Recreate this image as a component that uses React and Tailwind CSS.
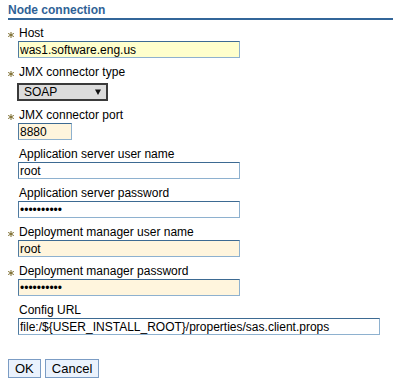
import React from "react";

function Star() {
  return (
    <svg width="6" height="6" viewBox="0 0 6 6" className="mt-[6px] ml-0">
      <g stroke="#7a6a2a" strokeWidth="1" strokeLinecap="round">
        <line x1="3" y1="0.3" x2="3" y2="5.7" />
        <line x1="0.5" y1="1.6" x2="5.5" y2="4.4" />
        <line x1="0.5" y1="4.4" x2="5.5" y2="1.6" />
      </g>
    </svg>
  );
}

function Label({ req, children }) {
  return (
    <div className="flex items-start leading-[15px] h-[15px]">
      <div className="w-[11px] flex-none">{req ? <Star /> : null}</div>
      <span>{children}</span>
    </div>
  );
}

function Field({ req, label, value, width, bg, type = "text" }) {
  return (
    <div>
      <Label req={req}>{label}</Label>
      <div className="pl-[10px]">
        <input
          readOnly
          type={type}
          value={value}
          className={`block h-[17px] ${width} ${bg} border border-[#8eb1cf] border-t-[#3d6a92] border-l-[#4f7aa0] px-[1px] text-[12px] leading-none text-black outline-none`}
        />
      </div>
    </div>
  );
}

export default function App() {
  return (
    <div className="w-[393px] h-[384px] bg-white text-[12px] text-black font-['Liberation_Sans',Arial,sans-serif]">
      <div className="pl-2 pt-[3px]">
        <h2 className="font-bold text-[#2f6296] leading-[15px] border-b-2 border-[#336699]">
          Node connection
        </h2>
      </div>
      <div className="pl-2 pt-[6px] flex flex-col gap-[7px]">
        <Field req label="Host" value="was1.software.eng.us" width="w-[222px]" bg="bg-[#ffffcc]" />
        <div>
          <Label req>JMX connector type</Label>
          <div className="pl-[9px] pt-[3px]">
            <div className="w-[91px] h-[18px] border-2 border-[#3a3a3a] bg-[#dcdcdc] flex items-center justify-between pl-[5px] pr-[5px]">
              <span className="leading-none text-[12px] text-black">SOAP</span>
              <svg width="6" height="6" viewBox="0 0 6 6">
                <polygon points="0,0.5 6,0.5 3,6" fill="#111" />
              </svg>
            </div>
          </div>
        </div>
        <Field req label="JMX connector port" value="8880" width="w-[54px]" bg="bg-[#fff5dd]" />
        <Field label="Application server user name" value="root" width="w-[222px]" bg="bg-white" />
        <Field label="Application server password" value="rootroot12" type="password" width="w-[222px]" bg="bg-white" />
        <Field req label="Deployment manager user name" value="root" width="w-[222px]" bg="bg-[#fff5dd]" />
        <Field req label="Deployment manager password" value="rootroot12" type="password" width="w-[222px]" bg="bg-[#fff5dd]" />
        <Field label="Config URL" value="file:/${USER_INSTALL_ROOT}/properties/sas.client.props" width="w-[362px]" bg="bg-white" />
      </div>
      <div className="pl-2 pt-[24px] flex gap-[4px]">
        <button className="h-[19px] px-[6px] border border-[#7b9cc4] bg-[#eaf2fd] text-[13px] leading-none text-black">
          OK
        </button>
        <button className="h-[19px] px-[6px] border border-[#7b9cc4] bg-[#eaf2fd] text-[13px] leading-none text-black">
          Cancel
        </button>
      </div>
    </div>
  );
}
